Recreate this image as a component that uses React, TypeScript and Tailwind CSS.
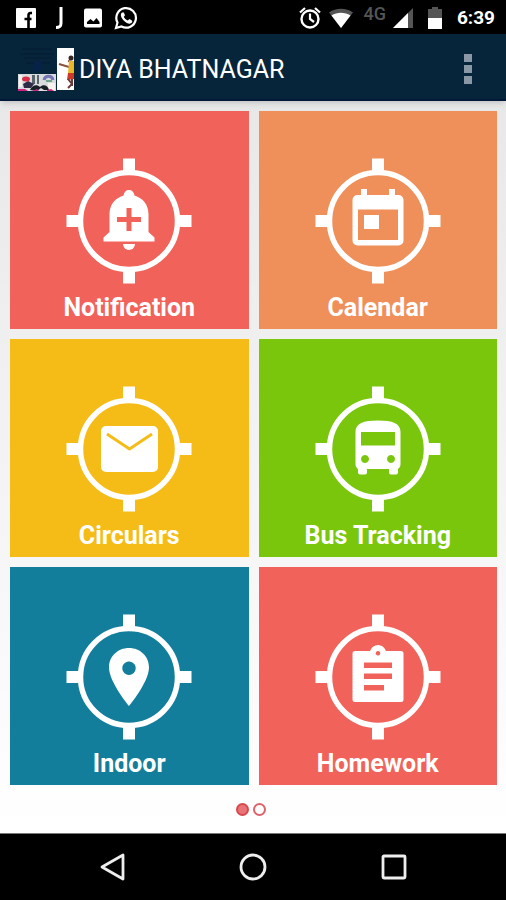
import type { ReactNode } from 'react';

interface Tile {
  label: string;
  bg: string;
  icon: ReactNode;
}

// Glyphs are drawn in the 126x126 box of the target ring
const BellIcon = () => (
  <>
    <path
      fill="#fff"
      fillRule="evenodd"
      d="M63 32c-3 0-5 2-5.500 5.500C49 40 43.500 47 43.500 56v18L37.500 79.500v4h51v-4l-6-5.500V56c0-9-5.500-16-14-18.500C68 34 66 32 63 32zM60.500 50h5v9H75v5h-9.500v9h-5v-9H51v-5h9.500z"
    />
    <path fill="#fff" d="M57 86h12a6 6 0 0 1-12 0z" />
  </>
);

const CalendarIcon = () => (
  <path
    fill="#fff"
    fillRule="evenodd"
    d="M46 31h6v6h22v-6h6v6h3.500a5 5 0 0 1 5 5v40.500a5 5 0 0 1-5 5h-41a5 5 0 0 1-5-5V42a5 5 0 0 1 5-5H46zM43 51.500V82h40V51.500zM49 57h15v14H49z"
  />
);

const MailIcon = () => (
  <>
    <rect x="35" y="40" width="57" height="46" rx="5" fill="#fff" />
    <path d="M41 48l22.500 15L86 48" fill="none" stroke="#f5bc17" strokeWidth="3" />
  </>
);

const BusIcon = () => (
  <path
    fill="#fff"
    fillRule="evenodd"
    d="M40.500 46c0-9 8-11.500 22.500-11.500S85.500 37 85.500 46v32c0 2.500-1 3.500-2.500 5v3.500a2 2 0 0 1-2 2h-5a2 2 0 0 1-2-2V83H52v3.500a2 2 0 0 1-2 2h-5a2 2 0 0 1-2-2V83c-1.500-1.500-2.500-2.500-2.500-5zM46 46v13.500h34V46zM50 69a4 4 0 1 0 .01 0zM76 69a4 4 0 1 0 .01 0z"
  />
);

const PinIcon = () => (
  <path
    fill="#fff"
    fillRule="evenodd"
    d="M63 34c-11.500 0-20 8.500-20 19.500C43 68 63 92 63 92s20-24 20-38.500C83 42.500 74.500 34 63 34zM63 47.500a6.700 6.700 0 1 1-.01 0z"
  />
);

const ClipboardIcon = () => (
  <path
    fill="#fff"
    fillRule="evenodd"
    d="M40 37h15c1.500-4 4.500-6 8-6s6.500 2 8 6h15a2.500 2.500 0 0 1 2.500 2.500v46A2.500 2.500 0 0 1 86 88H40a2.500 2.500 0 0 1-2.500-2.500v-46A2.500 2.500 0 0 1 40 37zM63 37a2.300 2.300 0 1 0 .01 0zM49 48.500v5.500h28v-5.500zM49 59.500V65h28v-5.500zM49 71v5.500h20V71z"
  />
);

const tiles: Tile[] = [
  { label: 'Notification', bg: 'bg-[#f1625a]', icon: <BellIcon /> },
  { label: 'Calendar', bg: 'bg-[#ef8f5a]', icon: <CalendarIcon /> },
  { label: 'Circulars', bg: 'bg-[#f5bc17]', icon: <MailIcon /> },
  { label: 'Bus Tracking', bg: 'bg-[#7ac60c]', icon: <BusIcon /> },
  { label: 'Indoor', bg: 'bg-[#137e9c]', icon: <PinIcon /> },
  { label: 'Homework', bg: 'bg-[#f1625a]', icon: <ClipboardIcon /> },
];

const TargetRing = ({ children }: { children: ReactNode }) => (
  <svg className="h-[126px] w-[126px]" viewBox="0 0 126 126" aria-hidden="true">
    <circle cx="63" cy="63" r="48.500" fill="none" stroke="#fff" strokeWidth="5.500" />
    <path fill="#fff" d="M57 0.500h12v15H57zM57 110.500h12v15H57zM0.500 57h15v12h-15zM110.500 57h15v12h-15z" />
    {children}
  </svg>
);

const StatusBar = () => (
  <div className="flex h-[34px] items-center justify-between bg-black pl-4 pr-[11px] pt-[2px] text-white">
    <div className="flex items-center gap-4">
      {/* Facebook */}
      <svg className="h-5 w-5" viewBox="0 0 20 20">
        <rect width="20" height="20" rx="1" fill="#fff" />
        <path d="M16 5h-1.500c-1.500 0-2 .800-2 2.500V20M8.500 11h7" fill="none" stroke="#000" strokeWidth="2.600" />
      </svg>
      <svg className="h-6 w-4" viewBox="0 0 16 24">
        <path d="M9 1v16c0 3-1 4.500-5 4.500" fill="none" stroke="#fff" strokeWidth="3" />
      </svg>
      {/* Picture */}
      <svg className="h-5 w-[18px]" viewBox="0 0 18 20">
        <rect width="18" height="19" y="0.500" rx="2" fill="#fff" />
        <path d="M3 16v-2l3.500-3 3 2.500 3-3.500 3 4v2z" fill="#000" />
      </svg>
      {/* WhatsApp */}
      <svg className="-ml-1 h-6 w-6" viewBox="0 0 24 24">
        <path d="M2 22l1.500-5.500A9.800 9.800 0 1 1 7.500 20.500z" fill="none" stroke="#fff" strokeWidth="2.200" />
        <path d="M8 6.500c-2.300 2-.800 5.500 2 8.200s6.300 4.300 8 1.600c.600-1 .200-1.500-.500-2L15.500 13l-1.700 1.400c-2-.800-3.200-2-4-3.700l1.200-1.400L9.800 6.500z" fill="#fff" />
      </svg>
    </div>
    <div className="flex items-center">
      {/* Alarm */}
      <svg className="h-6 w-[22px]" viewBox="1 0 22 24" fill="none" stroke="#fff">
        <circle cx="12" cy="13" r="8.500" strokeWidth="2.400" />
        <path d="M12 7.500V13l4 3M2 6.500l5-4.500M22 6.500L17 2" strokeWidth="2.200" />
      </svg>
      {/* Wifi */}
      <svg className="ml-2 h-5 w-6" viewBox="0 0 24 20">
        <path d="M12 20L0 4.500C7-.500 17-.500 24 4.500z" fill="#555" />
        <path d="M12 20L2.500 7.500c5.500-3.700 13.500-3.700 19 0z" fill="#fff" />
      </svg>
      <span className="ml-[10px] pb-2 text-lg font-medium leading-5 text-[#555]">4G</span>
      {/* Signal */}
      <svg className="ml-[7px] h-5 w-5" viewBox="0 0 20 20">
        <path d="M20 0v20H0z" fill="#555" />
        <path d="M15 5v15H0z" fill="#fff" />
      </svg>
      {/* Battery */}
      <svg className="ml-[14px] h-[22px] w-4" viewBox="0 0 16 22">
        <path d="M1 2h4V0h6v2h4v9H1z" fill="#555" />
        <path d="M1 11h14v11H1z" fill="#fff" />
      </svg>
      <span className="ml-[14px] text-[19px] font-bold leading-6">6:39</span>
    </div>
  </div>
);

const SchoolLogo = () => (
  <svg className="h-[46px] w-14" viewBox="0 0 56 46" aria-hidden="true">
    <path d="M4 3h30M2 8h34M6 12h28M8 17h24" stroke="#061f36" strokeWidth="1.500" />
    <path d="M16 16l7-2v10l-7 2z" fill="#072248" />
    {/* Photo strip */}
    <rect y="28" width="38" height="17" fill="#d9dbdc" />
    <path d="M1 29h3v12H1zM30 37h7v7h-7z" fill="#f6f3ee" />
    <path d="M14 29h3v9h-3zM19 29h2v9h-2z" fill="#59646b" />
    <path d="M5 38l5-3 6 3-3 4H6z" fill="#2e2c46" />
    <ellipse cx="8" cy="33" rx="4" ry="2.500" fill="#d92e48" />
    <path d="M12 44c2-5 7-6 10-3 3-3 8-2 9 3h-5l-3-2-4 3z" fill="#182026" />
    <path d="M26 34c1-5 8-5 9 0" fill="none" stroke="#7476b5" strokeWidth="3" />
    <path d="M28 35h6" stroke="#6da58b" strokeWidth="2" />
    <path d="M0 43h7l3 2H0zM14 45l5-2 2 2zM29 44l4-1 3 2h-7z" fill="#cf2381" />
    {/* Dancer panel */}
    <rect x="39" y="2" width="17" height="42" fill="#fff" />
    <circle cx="53" cy="12" r="2.500" fill="#382622" />
    <path d="M41 18l10 3M50 15l5 1" stroke="#8a5440" strokeWidth="2" />
    <path d="M51 15h5v13h-6z" fill="#eab729" />
    <path d="M50 27h6v6l-7 1z" fill="#d13826" />
    <path d="M50 33l4 5-4 4M54 33v7" fill="none" stroke="#6b3c39" strokeWidth="2" />
  </svg>
);

export default function App() {
  return (
    <div className="flex min-h-screen flex-col bg-white font-[Roboto,sans-serif]">
      <StatusBar />

      <header className="relative flex h-[67px] items-center border-b-2 border-[#021a38] bg-[#06253b] pl-[18px] pr-[26px] pt-1 shadow-md">
        <SchoolLogo />
        <h1 className="ml-[5px] flex-1 pt-[2px] text-[25px] leading-8 text-white">DIYA BHATNAGAR</h1>
        <button type="button" aria-label="More options" className="flex w-6 flex-col items-center gap-[3px]">
          <span className="h-2 w-2 bg-[#8a97a5]" />
          <span className="h-2 w-2 bg-[#8a97a5]" />
          <span className="h-2 w-2 bg-[#8a97a5]" />
        </button>
      </header>

      <main className="flex flex-1 flex-col bg-linear-to-b from-[#e8e8e9] to-white">
        <div className="grid grid-cols-2 gap-[10px] pl-[10px] pr-[9px] pt-[10px]">
          {tiles.map((tile) => (
            <button key={tile.label} type="button" className={`flex h-[218px] flex-col items-center pt-[47px] ${tile.bg}`}>
              <TargetRing>{tile.icon}</TargetRing>
              <span className="mt-2 text-[25px] font-bold leading-8 text-white">{tile.label}</span>
            </button>
          ))}
        </div>
        <div className="flex flex-1 items-center justify-center gap-1 pr-1">
          <span className="h-[13px] w-[13px] rounded-full border-2 border-[#d9484c] bg-[#e87478]" />
          <span className="h-[13px] w-[13px] rounded-full border-2 border-[#dc6469] bg-white" />
        </div>
      </main>

      <nav className="flex h-[67px] items-center justify-between border-t border-[#777] bg-black px-[99px]">
        <button type="button" aria-label="Back">
          <svg className="h-7 w-7" viewBox="0 0 28 28">
            <path d="M24 2v24L3 14z" fill="none" stroke="#eee" strokeWidth="2.800" strokeLinejoin="round" />
          </svg>
        </button>
        <button type="button" aria-label="Home">
          <svg className="h-7 w-7" viewBox="0 0 28 28">
            <circle cx="14" cy="14" r="12" fill="none" stroke="#eee" strokeWidth="2.800" />
          </svg>
        </button>
        <button type="button" aria-label="Recent apps">
          <svg className="h-7 w-7" viewBox="0 0 28 28">
            <rect x="4" y="3" width="22" height="22" rx="1" fill="none" stroke="#eee" strokeWidth="2.800" />
          </svg>
        </button>
      </nav>
    </div>
  );
}
